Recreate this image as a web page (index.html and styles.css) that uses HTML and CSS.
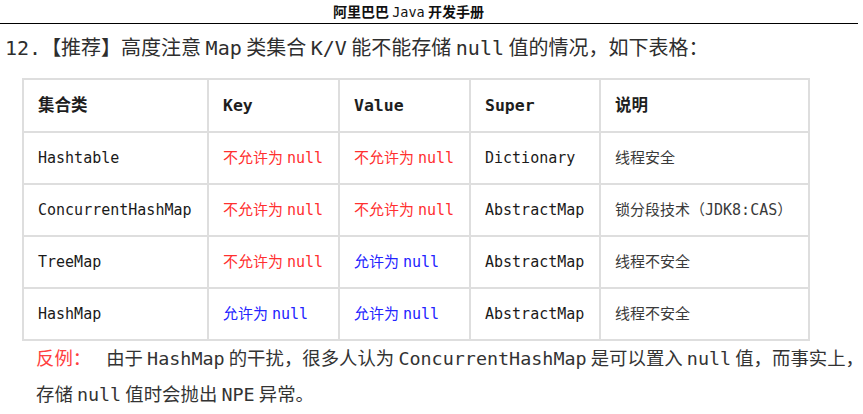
FILE: index.html
```html
<!DOCTYPE html>
<html lang="zh-CN">
<head>
<meta charset="utf-8">
<title>阿里巴巴 Java 开发手册</title>
<link rel="stylesheet" href="styles.css">
</head>
<body>
<header class="page-header"><span class="header-title">阿里巴巴 <span class="mono">Java</span> 开发手册</span></header>
<h2 class="rule-title"><span class="mono">12.</span>【推荐】高度注意 <span class="mono">Map</span> 类集合 <span class="mono">K/V</span> 能不能存储 <span class="mono">null</span> 值的情况，如下表格：</h2>
<table class="map-table">
  <colgroup>
    <col class="c1"><col class="c2"><col class="c3"><col class="c4"><col class="c5">
  </colgroup>
  <thead>
    <tr><th>集合类</th><th>Key</th><th>Value</th><th>Super</th><th>说明</th></tr>
  </thead>
  <tbody>
    <tr><td>Hashtable</td><td class="no">不允许为 null</td><td class="no">不允许为 null</td><td>Dictionary</td><td class="desc">线程安全</td></tr>
    <tr><td>ConcurrentHashMap</td><td class="no">不允许为 null</td><td class="no">不允许为 null</td><td>AbstractMap</td><td class="desc">锁分段技术（JDK8:CAS）</td></tr>
    <tr><td>TreeMap</td><td class="no">不允许为 null</td><td class="yes">允许为 null</td><td>AbstractMap</td><td class="desc">线程不安全</td></tr>
    <tr><td>HashMap</td><td class="yes">允许为 null</td><td class="yes">允许为 null</td><td>AbstractMap</td><td class="desc">线程不安全</td></tr>
  </tbody>
</table>
<p class="note"><span class="note-label">反例：</span><span class="note-body">由于 <span class="mono">HashMap</span> 的干扰，很多人认为 <span class="mono">ConcurrentHashMap</span> 是可以置入 <span class="mono">null</span> 值，而事实上，<br>存储 <span class="mono">null</span> 值时会抛出 <span class="mono">NPE</span> 异常。</span></p>
</body>
</html>
```
FILE: styles.css
```css
html, body {
  margin: 0;
  padding: 0;
  background: #ffffff;
}

body {
  width: 863px;
  font-family: "Noto Sans CJK SC", "DejaVu Sans", sans-serif;
  color: #2a2a2a;
}

.mono {
  font-family: "DejaVu Sans Mono", "Noto Sans CJK SC", monospace;
}

.page-header {
  width: 858px;
  height: 24px;
  border-bottom: 1.5px solid #000;
  box-sizing: border-box;
  padding-left: 333px;
  font-size: 14px;
  line-height: 22px;
  font-weight: 600;
  color: #111;
}

.header-title .mono {
  font-weight: 400;
  font-size: 13.5px;
}

.rule-title {
  margin: 9px 0 0 5px;
  font-size: 20px;
  line-height: 28px;
  font-weight: 400;
  color: #2e2e2e;
  white-space: nowrap;
}

.map-table {
  margin: 16px 0 0 22px;
  border-collapse: collapse;
  table-layout: fixed;
  width: 786px;
  font-family: "DejaVu Sans Mono", "Noto Sans CJK SC", monospace;
  font-size: 15px;
  color: #1a1a1a;
}

.c1 { width: 185px; }
.c2 { width: 131px; }
.c3 { width: 131px; }
.c4 { width: 130px; }
.c5 { width: 209px; }

.map-table th,
.map-table td {
  border: 2px solid #dedede;
  padding: 0 0 0 14px;
  line-height: 20px;
  text-align: left;
  vertical-align: middle;
  white-space: nowrap;
}

.map-table thead tr {
  height: 53px;
}

.map-table tbody tr {
  height: 52px;
}

.map-table th {
  font-size: 16.5px;
  font-weight: 700;
  color: #1e1e1e;
}

.map-table td.no {
  color: #ff3030;
  word-spacing: -5px;
}

.map-table td.yes {
  color: #2424ff;
  word-spacing: -5px;
}

.map-table td.desc {
  color: #3a3a3a;
}

.note {
  margin: -1px 0 0 36px;
  font-size: 18.4px;
  line-height: 35px;
  color: #333;
  white-space: nowrap;
}

.note-label {
  color: #ff4040;
  margin-right: 15px;
}
```
